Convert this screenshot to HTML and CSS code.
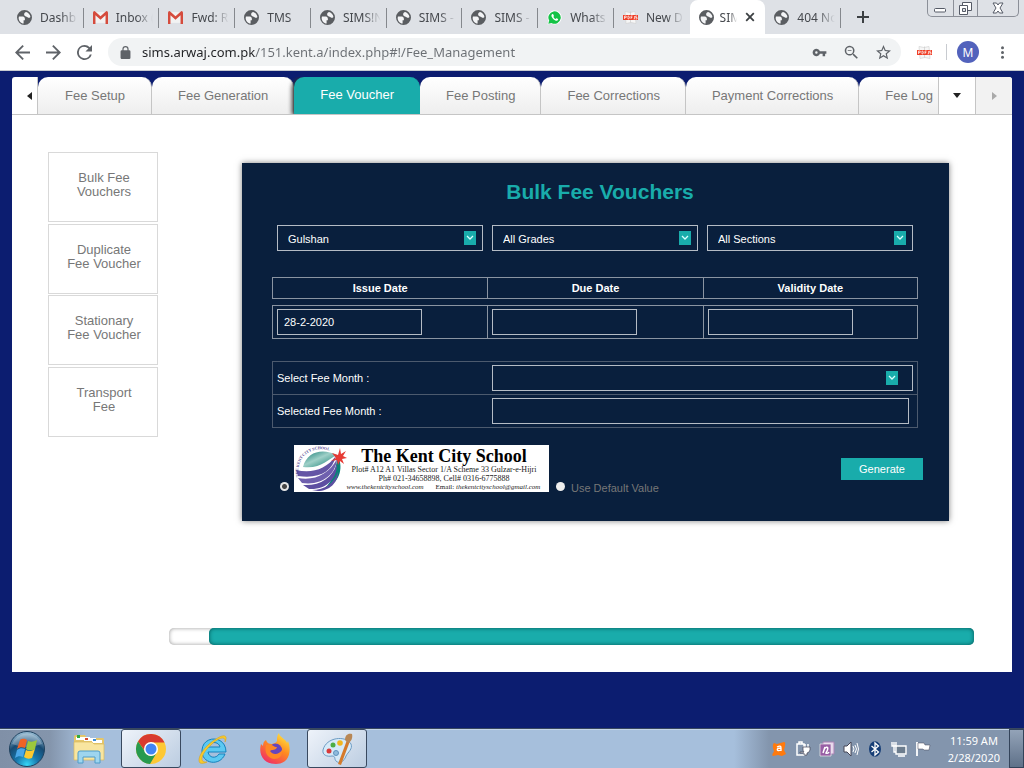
FILE: index.html
```html
<!DOCTYPE html>
<html lang="en">
<head>
<meta charset="utf-8">
<meta name="viewport" content="width=device-width, initial-scale=1">
<title>Fee Management</title>
<link rel="stylesheet" href="styles.css">
</head>
<body>
<svg class="sprite" aria-hidden="true">
  <symbol id="globe" viewBox="2 2 20 20"><circle cx="12" cy="12" r="9.500" fill="#f3f4f6"/><path fill-rule="evenodd" d="M12 2a10 10 0 1 0 0 20 10 10 0 0 0 0-20zM4.600 10.600h5.200c1.700 0 2.700 1.400 2.700 3.200v1.700h-1.700v4.600C7 19.800 4.200 16.500 4.200 12.600zM11.500 7.500c0-1.700 1.300-2.700 2.800-3 3 .9 5.200 3.600 5.600 6.700-1.200 1.400-2.600 1.400-3.800.4-1.300-1.100-4.600-1-4.600-4.100z" fill="#5a5d61"/></symbol>
  <symbol id="gmail" viewBox="0 0 14 12"><path fill="#f2f2f2" d="M1 1h12v10H1z"/><path fill="#d54b3d" d="M0 1.500Q0 0 1.500 0L7 4.800 12.500 0Q14 0 14 1.500V12h-2.300V4L7 8 2.300 4v8H0z"/></symbol>
  <symbol id="pdf" viewBox="0 0 15 14"><path d="M2 1l5 1 5-1 1 12-5-1-5 1z" fill="#f6f6f6" stroke="#d2d2d2" stroke-width=".7"/><path d="M7.500 1v11" stroke="#ccc" stroke-width=".7"/><path fill="#ef3e26" d="M0 4.500h15v5H0z"/><path d="M1.500 8.500v-3h1.700v1.600H1.500M5 5.500v3c2 0 2-3 0-3M8 8.500v-3h1.600M8 7h1.300M11.600 5.500v3h-1M14 5.500h-1.300V7H14v1.500h-1.300" fill="none" stroke="#fff" stroke-width=".7"/></symbol>
  <symbol id="chevron" viewBox="0 0 12 14"><path d="M3 5l3 3 3-3" fill="none" stroke="#d8ffff" stroke-width="1.300"/></symbol>
</svg>

<header class="browser">
  <div class="tabstrip">
    <nav class="tabs" aria-label="Open tabs">
      <button class="tab"><svg class="fav"><use href="#globe"/></svg><span>Dashb</span></button>
      <button class="tab"><svg class="fav"><use href="#gmail"/></svg><span>Inbox (</span></button>
      <button class="tab"><svg class="fav"><use href="#gmail"/></svg><span>Fwd: R</span></button>
      <button class="tab"><svg class="fav"><use href="#globe"/></svg><span>TMS</span></button>
      <button class="tab"><svg class="fav"><use href="#globe"/></svg><span>SIMS!N</span></button>
      <button class="tab"><svg class="fav"><use href="#globe"/></svg><span>SIMS -</span></button>
      <button class="tab"><svg class="fav"><use href="#globe"/></svg><span>SIMS -</span></button>
      <button class="tab"><svg class="fav" viewBox="0 0 15 15"><path d="M.5 14.500l1-3.600A7 7 0 1 1 4.200 13.600z" fill="#fff"/><path d="M1.300 13.700l.9-3.100A6.200 6.200 0 1 1 4.500 12.900z" fill="#14c346"/><path d="M5.300 4c-1.700 1.200-.8 3.200.9 4.900s4 2.500 4.800 1.100c.4-.9 0-1-.9-1.500s-1 0-1.500.4C7.700 8.500 6.800 7.700 6.400 6.900c.9-.9.500-1 .1-2.100-.3-.8-.6-1-1.200-.8z" fill="#fff"/></svg><span>Whats</span></button>
      <button class="tab last"><svg class="fav"><use href="#pdf"/></svg><span>New D</span></button>
      <button class="tab active"><svg class="fav"><use href="#globe"/></svg><span>SIM</span><svg class="close" viewBox="0 0 10 10"><path d="M1.200 1.200l7.600 7.600M8.800 1.200L1.200 8.800" stroke="#3c4043" stroke-width="1.800"/></svg></button>
      <button class="tab"><svg class="fav"><use href="#globe"/></svg><span>404 No</span></button>
    </nav>
    <button class="newtab" aria-label="New tab"><svg viewBox="0 0 12 12"><path d="M6 0v12M0 6h12" stroke="#3c4043" stroke-width="2"/></svg></button>
    <div class="winctl">
      <button aria-label="Minimize"><svg viewBox="0 0 25 16"><rect x="6.500" y="8.500" width="11" height="3.500" rx="1" fill="#fff" stroke="#555a66"/></svg></button>
      <button aria-label="Restore"><svg viewBox="0 0 23 16"><path d="M8.500 2.500h9v8h-9z" fill="#fff" stroke="#555a66"/><path d="M5.500 5.500h8v9h-8z" fill="#fff" stroke="#555a66"/><path d="M8.500 8.500h3v3h-3z" fill="#dfe3e8" stroke="#555a66"/></svg></button>
      <button aria-label="Close window"><svg viewBox="1 0 40 16"><path d="M16 3h3.500l1.500 2 1.500-2H26l-3 5 3 5h-3.500L21 11l-1.500 2H16l3-5z" fill="#fff" stroke="#555a66"/></svg></button>
    </div>
  </div>
  <div class="toolbar">
    <button aria-label="Back"><svg viewBox="4 4 16 16"><path d="M20 11H7.830l5.590-5.590L12 4l-8 8 8 8 1.410-1.410L7.830 13H20z"/></svg></button>
    <button aria-label="Forward"><svg viewBox="4 4 16 16"><path d="M12 4l-1.410 1.410L16.170 11H4v2h12.170l-5.580 5.590L12 20l8-8z"/></svg></button>
    <button aria-label="Reload"><svg viewBox="4 4 16 16"><path d="M17.650 6.350A7.960 7.960 0 0 0 12 4a8 8 0 1 0 7.730 10h-2.080A6 6 0 1 1 12 6c1.660 0 3.140.69 4.220 1.780L13 11h7V4z"/></svg></button>
    <div class="omnibox">
      <svg class="lock" viewBox="4 1 16 21"><path d="M18 8h-1V6A5 5 0 0 0 7 6v2H6a2 2 0 0 0-2 2v10c0 1.100.9 2 2 2h12a2 2 0 0 0 2-2V10a2 2 0 0 0-2-2zM8.900 6a3.100 3.100 0 0 1 6.200 0v2H8.900z"/></svg>
      <input class="url" type="text" aria-label="Address" value="sims.arwaj.com.pk/151.kent.a/index.php#!/Fee_Management">
      <button aria-label="Passwords"><svg viewBox="0 0 24 24"><path d="M12.650 10A6 6 0 1 0 12.650 14H17v4h4v-4h2v-4zM7 14a2 2 0 1 1 0-4 2 2 0 0 1 0 4z"/></svg></button>
      <button aria-label="Zoom"><svg viewBox="2 2 20 20"><path d="M15.500 14h-.79l-.28-.27A6.500 6.500 0 1 0 13.730 14.430l.27.28v.79l5 4.990L20.490 19zm-6 0a4.500 4.500 0 1 1 0-9 4.500 4.500 0 0 1 0 9zM7 9h5v1H7z"/></svg></button>
      <button aria-label="Bookmark"><svg viewBox="2 2 20 20"><path d="M22 9.240l-7.190-.62L12 2 9.190 8.630 2 9.240l5.460 4.730L5.820 21 12 17.270 18.180 21l-1.630-7.030zM12 15.400l-3.760 2.270 1-4.280-3.320-2.880 4.380-.38L12 6.100l1.710 4.040 4.380.38-3.320 2.880 1 4.280z"/></svg></button>
    </div>
    <button aria-label="PDF extension"><svg><use href="#pdf"/></svg></button>
    <span class="sep"></span>
    <button class="avatar">M</button>
    <button aria-label="Menu"><svg viewBox="0 0 16 16"><circle cx="8" cy="3" r="1.600"/><circle cx="8" cy="8" r="1.600"/><circle cx="8" cy="13" r="1.600"/></svg></button>
  </div>
</header>

<main class="page">
  <section class="panel">
    <div class="pagetabs">
      <button class="arrow" aria-label="Previous"><svg viewBox="0 0 6 8"><path d="M5 0v8L0 4z" fill="#222"/></svg></button>
      <nav class="strip" aria-label="Fee sections">
        <a href="#" class="ptab">Fee Setup</a>
        <a href="#" class="ptab">Fee Generation</a>
        <a href="#" class="ptab current">Fee Voucher</a>
        <a href="#" class="ptab">Fee Posting</a>
        <a href="#" class="ptab">Fee Corrections</a>
        <a href="#" class="ptab">Payment Corrections</a>
        <a href="#" class="ptab">Fee Log</a>
      </nav>
      <button class="drop" aria-label="All sections"><svg viewBox="0 0 8 5"><path d="M0 0h8L4 5z" fill="#222"/></svg></button>
      <button class="drop off" aria-label="Next"><svg viewBox="0 0 5 8"><path d="M0 0v8l5-4z" fill="#aaa"/></svg></button>
    </div>
    <div class="body">
      <nav class="side" aria-label="Voucher types">
        <a href="#">Bulk Fee<br>Vouchers</a>
        <a href="#">Duplicate<br>Fee Voucher</a>
        <a href="#">Stationary<br>Fee Voucher</a>
        <a href="#">Transport<br>Fee</a>
      </nav>
      <div class="content">
        <form class="card">
          <h1>Bulk Fee Vouchers</h1>
          <div class="filters">
            <div class="pick"><select aria-label="Campus"><option>Gulshan</option></select><svg><use href="#chevron"/></svg></div>
            <div class="pick"><select aria-label="Grade"><option>All Grades</option></select><svg><use href="#chevron"/></svg></div>
            <div class="pick"><select aria-label="Section"><option>All Sections</option></select><svg><use href="#chevron"/></svg></div>
          </div>
          <table class="dates">
            <thead><tr><th id="issue">Issue Date</th><th id="due">Due Date</th><th id="validity">Validity Date</th></tr></thead>
            <tbody><tr>
              <td><input type="text" aria-labelledby="issue" value="28-2-2020"></td>
              <td><input type="text" aria-labelledby="due"></td>
              <td><input type="text" aria-labelledby="validity"></td>
            </tr></tbody>
          </table>
          <table class="months">
            <tr><th><label for="month">Select Fee Month :</label></th><td><div class="pick wide"><select id="month"><option></option></select><svg><use href="#chevron"/></svg></div></td></tr>
            <tr><th><label for="chosen">Selected Fee Month :</label></th><td><input id="chosen" type="text"></td></tr>
          </table>
          <div class="actions">
            <input type="radio" name="head" id="head1" checked>
            <label for="head1"><svg class="banner" viewBox="0 0 255 47">
              <defs>
                <linearGradient id="ball" x1="0" y1="0" x2="1" y2="1"><stop offset="0" stop-color="#0d7770"/><stop offset=".45" stop-color="#9fd0c8"/><stop offset="1" stop-color="#08796c"/></linearGradient>
                <path id="arc" d="M5 32C1 12 18-3 42 8"/>
              </defs>
              <rect width="255" height="47" fill="#fff"/>
              <path d="M9 22C13 6 29 3 43 10 33 15 27 24 9 22z" fill="url(#ball)"/>
              <path d="M44 11c6 13 1 28-14 33 10-9 11-20 14-33z" fill="#0b8277"/>
              <path d="M2 25c16 4 30-1 40-14C38 27 25 34 4 31z" fill="#6455a5"/>
              <path d="M4 33c17 3 31-4 39-19-1 15-15 27-35 24z" fill="#6f60ae"/>
              <path d="M9 40c17 1 29-7 34-21 0 15-11 26-28 25z" fill="#5d4fa1"/>
              <path d="M18 45c13 0 22-7 26-18 0 11-9 19-20 19z" fill="#5d4fa1"/>
              <path d="M46 3l1 6 5-3-3 5 4 2-5 1 2 5-4-3-2 4-1-5-6 1 5-3-4-5 6 2z" fill="#e63b35"/>
              <text font-size="4" font-weight="bold" fill="#55468f"><textPath href="#arc">THE KENT CITY SCHOOL</textPath></text>
              <g fill="#222" text-anchor="middle">
                <text x="150" y="17" font-size="18" font-weight="bold" fill="#000">The Kent City School</text>
                <text x="150" y="27" font-size="8">Plot# A12 A1 Villas Sector 1/A Scheme 33 Gulzar-e-Hijri</text>
                <text x="150" y="36" font-size="8">Ph# 021-34658898, Cell# 0316-6775888</text>
                <text x="91" y="44" font-size="7" font-style="italic">www.thekentcityschool.com</text>
                <text x="194" y="44" font-size="7">Email: <tspan font-style="italic">thekentcityschool@gmail.com</tspan></text>
              </g>
            </svg></label>
            <input type="radio" name="head" id="head2">
            <label for="head2" class="default">Use Default Value</label>
            <button type="button" class="generate">Generate</button>
          </div>
        </form>
        <div class="progress" role="progressbar" aria-label="Progress"><div class="fill"></div></div>
      </div>
    </div>
  </section>
</main>

<footer class="taskbar">
  <button class="start" aria-label="Start"><svg viewBox="0 0 38 38"><defs><radialGradient id="orb" cx=".5" cy=".95" r=".9"><stop offset="0" stop-color="#35d7f7"/><stop offset=".35" stop-color="#1878ad"/><stop offset=".7" stop-color="#174a72"/><stop offset="1" stop-color="#8eb4cd"/></radialGradient></defs><circle cx="19" cy="19" r="17.500" fill="url(#orb)" stroke="#20425f"/><path d="M4 14A16 16 0 0 1 34 14Q19 20 4 14z" fill="#fff" opacity=".25"/><path d="M12 10c3-2 5-1 7 0l-2 8c-3-1-5-1-8 1z" fill="#ef6326"/><path d="M20 11c3 1 5 1 9-1l-2 9c-3 2-6 2-9 0z" fill="#9bc83c"/><path d="M9 20c3-2 5-2 8-1l-2 8c-3-1-5-1-8 1z" fill="#4aa7e8"/><path d="M18 20c3 2 6 1 9-1l-3 9c-3 1-5 1-8-1z" fill="#fdc92f"/></svg></button>
  <button class="task" aria-label="Explorer"><svg viewBox="0 0 32 32"><path d="M1 4Q1 2 3 2h9l2 3h16q1 0 1 2v20H1z" fill="#e5c66b"/><path d="M3 4h14v3H3z" fill="#fff"/><path d="M4 2h3v3H4z" fill="#2faa3e"/><path d="M11 5h12v3H11z" fill="#fff"/><path d="M12 5h3v2h-3z" fill="#d84a32"/><path d="M19 7h10v3H19z" fill="#fff"/><path d="M20 6h3v2h-3z" fill="#3c8fd8"/><path d="M1 9h18l2 2h10v16H1z" fill="#f8e5a0" stroke="#d9b95c" stroke-width=".7"/><path d="M5 30V20q0-2 2-2h18q2 0 2 2v10h-5v-6H10v6z" fill="#9ed5ef" stroke="#4e9cc9"/></svg></button>
  <button class="task open" aria-label="Chrome"><svg viewBox="0 0 32 32"><circle cx="16" cy="16" r="15" fill="#fdc834"/><path d="M3 8.500A15 15 0 0 1 29.500 9.500H16A6.500 6.500 0 0 0 10 18z" fill="#d83b30"/><path d="M3 8.500A15 15 0 0 0 15 31l6.500-11A6.500 6.500 0 0 1 10 18.500z" fill="#279a50"/><circle cx="16" cy="16" r="7" fill="#fff"/><circle cx="16" cy="16" r="5.500" fill="#4285f4"/></svg></button>
  <button class="task" aria-label="Internet Explorer"><svg viewBox="0 0 32 32"><path d="M29 19H11c1 6 8 7 11 2h6C23 34 4 31 5 17 6 2 29 2 29 19zM11 14h12c-1-6-11-6-12 0z" fill="#5cc9f2" stroke="#1482bd"/><path d="M28 9C31 3 28 0 19 6 7 13-1 26 3 30c2 1 5 0 7-1-9 1-5-9 4-17C21 5 29 2 28 9z" fill="#f8c92c" stroke="#d49e14" stroke-width=".5"/></svg></button>
  <button class="task" aria-label="Firefox"><svg viewBox="0 0 32 32"><defs><linearGradient id="fox" x1=".8" y1="0" x2=".2" y2="1"><stop offset="0" stop-color="#ffe840"/><stop offset=".45" stop-color="#ff8a20"/><stop offset="1" stop-color="#f0276b"/></linearGradient></defs><path d="M20 0c0 4 7 6 8 10l1-2c4 10 1 23-12 23C5 31-1 22 2 11l2 2c0-3 1-5 3-6 1 3 3 4 6 4 2-1 4-1 5-3 0-3 0-6 2-8z" fill="url(#fox)"/><circle cx="16.500" cy="17" r="6.500" fill="#6645bd"/><path d="M7 12c6-2 7 2 11 2-1 4-5 2-7 4 3 5 10 3 12-1 1 6-3 9-8 9-6-1-10-6-8-14z" fill="#ff8725"/></svg></button>
  <button class="task open" aria-label="Paint"><svg viewBox="0 0 32 32"><path d="M2 17C5 4 25 2 30 11c2 5-3 8-5 12-2 6-7 8-10 5-2-2 0-5-4-5-5 1-10-1-9-6z" fill="#d6eaf8" stroke="#6d9cc3"/><circle cx="8" cy="18" r="2.500" fill="#d93939"/><circle cx="12" cy="12" r="2.500" fill="#4dad43"/><circle cx="19" cy="10" r="2.800" fill="#f2b61f"/><circle cx="15" cy="20" r="2.500" fill="#91bcdd" stroke="#5f92bd"/><path d="M26 7l3 1-9 24-3-1z" fill="#d47a2b"/><path d="M24 7c0-5 3-7 7-6 1 4-1 8-4 9z" fill="#b88755"/></svg></button>
  <div class="tray">
    <svg viewBox="0 0 16 16"><path d="M3 2l3 1 7-2c2 0 1 3 1 4l-1 4 2 4-4 2-4-1-5 1c-2-1 1-4 1-5-1-3-2-6 0-8z" fill="#ff7a0d"/><path d="M6 6c4-2 4 0 4 1v3M10 7c-5 0-5 4 0 2" fill="none" stroke="#fff" stroke-width="1.300"/></svg>
    <svg viewBox="0 0 16 16"><path d="M2 3h7v11H2zM4 1h3v2H4z" fill="none" stroke="#fff" stroke-width="1.500"/><path d="M10 3v4M13 3v4" stroke="#fff" stroke-width="1.500"/><path d="M8 6h7v3q-1 3-3 3v2H9v-2H5v-1h4q-1-1-1-2z" fill="#fff" stroke="#445" stroke-width=".7"/></svg>
    <svg viewBox="0 0 16 16"><path d="M4 1h11v12H4z" fill="#e8d6ec" stroke="#a783b3"/><path d="M1 3h11v12H1z" fill="#985fa5" stroke="#eee" stroke-width=".7"/><path d="M4 12l2-6M5 8c4-4 5-1 2 4 2 1 3-1 3-1" fill="none" stroke="#fff" stroke-width="1.500"/></svg>
    <svg viewBox="0 0 16 16"><path d="M1 5h3l4-4v14l-4-4H1z" fill="#fff" stroke="#445"/><path d="M10 5q2 3 0 6M12 4q3 4 0 8M14 2q3 6 0 12" fill="none" stroke="#fff"/></svg>
    <svg viewBox="0 0 16 16"><ellipse cx="8" cy="8" rx="6" ry="7.800" fill="#163e76"/><path d="M4.500 5l7 6L8 14V2l3.500 3-7 6" fill="none" stroke="#fff" stroke-width="1.300"/></svg>
    <svg viewBox="0 0 16 16"><path d="M5 5h10v8H5z" fill="#6d7d8e" stroke="#fff" stroke-width="1.400"/><path d="M7 15h7M3 1v4M1 1v4h4V1M3 5v6h2" fill="none" stroke="#fff" stroke-width="1.400"/></svg>
    <svg viewBox="0 0 16 16"><path d="M2 1v14" stroke="#fff" stroke-width="1.800"/><path d="M3 2h6l1 2h5l-1 5H9L8 8H3z" fill="#fff" stroke="#445" stroke-width=".5"/></svg>
  </div>
  <div class="clock"><span>11:59 AM</span><span>2/28/2020</span></div>
  <button class="peek" aria-label="Show desktop"></button>
</footer>
</body>
</html>
```
FILE: styles.css
```css
* { box-sizing: border-box; }
body {
  margin: 0;
  min-height: 100vh;
  display: flex;
  flex-direction: column;
  background: #0c1d70;
  font-family: "Liberation Sans", Arial, sans-serif;
  font-size: 13px;
}
button { border: 0; padding: 0; margin: 0; background: none; font: inherit; color: inherit; }
a { color: inherit; text-decoration: none; }
svg { display: block; }
.sprite { position: absolute; width: 0; height: 0; }

/* Browser chrome */
.browser { font-family: "Noto Sans", "Open Sans", sans-serif; background: #fff; border-bottom: 1px solid #c8cbd0; }
.tabstrip { display: flex; height: 34px; background: #dee1e6; padding: 0 5px 0 8px; }
.tabs { display: flex; flex: 0 1 833px; min-width: 0; }
.tab {
  flex: 1 1 0;
  min-width: 0;
  display: flex;
  align-items: center;
  gap: 8px;
  padding: 0 2px 0 9px;
  font-size: 12px;
  color: #45484d;
  background: linear-gradient(#85888d, #85888d) right 8px / 1px 20px no-repeat;
}
.tab span {
  flex: 1;
  min-width: 0;
  overflow: hidden;
  white-space: nowrap;
  text-align: left;
  -webkit-mask-image: linear-gradient(90deg, #000 50%, transparent 90%);
  mask-image: linear-gradient(90deg, #000 50%, transparent 90%);
}
.tab.active { background: #fff; border-radius: 8px 8px 0 0; gap: 6px; }
.tab.last { background: none; }
.fav { width: 15px; height: 15px; flex: none; }
.close { width: 10px; height: 10px; flex: none; margin-right: 8px; }
.newtab { width: 44px; display: grid; place-items: center; }
.newtab svg { width: 12px; height: 12px; }
.winctl {
  margin-left: auto;
  display: flex;
  height: 17px;
  border: 1px solid #8b8f98;
  border-top: 0;
  border-radius: 0 0 5px 5px;
}
.winctl button + button { border-left: 1px solid #8b8f98; }
.winctl svg { height: 16px; }
.toolbar { display: flex; align-items: center; gap: 16px; height: 36px; padding: 0 14px 0 15px; color: #5f6368; }
.toolbar svg { width: 15px; height: 15px; fill: #5f6368; }
.omnibox {
  flex: 1;
  display: flex;
  align-items: center;
  gap: 17px;
  height: 28px;
  padding: 0 10px 0 12px;
  border-radius: 14px;
  background: #f1f3f4;
}
.toolbar .lock { width: 11px; height: 13px; margin-right: -6px; }
.url {
  flex: 1;
  min-width: 0;
  border: 0;
  padding: 0;
  font: 13px "Noto Sans", "Open Sans", sans-serif;
  color: #5f6368;
  background: linear-gradient(90deg, #202124 113px, #6b6f74 113px);
  -webkit-background-clip: text;
  background-clip: text;
  -webkit-text-fill-color: transparent;
}
.sep { width: 1px; height: 16px; background: #c8cbd0; margin: 0 -6px 0 -2px; }
.toolbar .avatar { width: 22px; height: 22px; border-radius: 50%; background: #5262bc; color: #fff; font-size: 12px; }

/* Page */
.page { flex: 1; padding: 6px 12px 48px; }
.panel { background: #fff; border-radius: 3px 3px 0 0; overflow: hidden; }
.pagetabs { display: flex; height: 38px; border-bottom: 1px solid #c5c5c5; color: #777; }
.arrow { width: 26px; padding-left: 15px; border-right: 1px solid #c5c5c5; }
.arrow svg { width: 6px; height: 8px; }
.strip { flex: 1; min-width: 0; display: flex; overflow: hidden; background: #0c1d70; }
.ptab {
  flex: none;
  padding: 0 25px 0 26px;
  line-height: 37px;
  border-right: 1px solid #c5c5c5;
  border-radius: 10px 10px 0 0;
  background: linear-gradient(#fff, #eee);
}
.ptab:first-child { padding: 0 26px 0 27px; }
.ptab.current { background: #19acab; color: #fff; line-height: 35px; border-color: #19acab; box-shadow: -2px 1px 4px #333; }
.drop { width: 37px; display: grid; place-items: center; border-left: 1px solid #c5c5c5; }
.drop svg { width: 8px; height: 5px; }
.drop.off { background: #f2f2f2; }
.drop.off svg { width: 5px; height: 8px; }
.body { display: flex; align-items: flex-start; gap: 11px; padding: 37px 38px 27px 36px; }
.side { flex: 0 0 110px; height: 285px; display: flex; flex-direction: column; justify-content: space-between; color: #777; }
.side a { height: 70px; padding: 18px 0 0 2px; border: 1px solid #d9d9d9; text-align: center; line-height: 14px; }
.content { flex: 1; min-width: 0; }

/* Voucher form */
.card {
  margin: 11px 25px 107px 73px;
  padding: 16px 31px 29px 30px;
  background: #091f3d;
  color: #fff;
  font-size: 11px;
  box-shadow: 0 0 6px rgba(0, 0, 0, .5);
}
.card h1 { margin: 0; padding-left: 10px; font-size: 21px; line-height: 26px; color: #19acab; text-align: center; }
.filters { display: grid; grid-template-columns: repeat(3, 1fr); gap: 9px; padding: 20px 5px 26px; }
.pick { position: relative; }
.pick svg { position: absolute; right: 7px; top: 6px; width: 12px; height: 14px; background: #19acab; pointer-events: none; }
.pick.wide svg { right: 15px; }
select, .dates input, .months input {
  display: block;
  width: 100%;
  height: 26px;
  appearance: none;
  border: 1px solid #b5bcc5;
  border-radius: 0;
  background: transparent;
  color: #fff;
  font: 11px "Liberation Sans", Arial, sans-serif;
  padding: 0 6px;
}
select { padding: 2px 10px 0; }
option { color: #000; }
table { width: 100%; table-layout: fixed; }
.dates { border-spacing: 0; margin-bottom: 22px; }
.dates th { height: 22px; padding: 0; border: 1px solid #8a94a2; border-right-width: 0; font-weight: bold; }
.dates td { padding: 3px 4px; border: 1px solid #8a94a2; border-right-width: 0; }
.dates th:last-child, .dates td:last-child { border-right-width: 1px; }
.dates thead::after { content: ""; display: block; height: 6px; }
.dates input { width: 145px; }
.months { border-collapse: collapse; }
.months tr { border: 1px solid #4c5a6e; }
.months th { width: 215px; padding: 0 4px; font-weight: normal; text-align: left; }
.months td { padding: 3px 4px; }
.months input { width: calc(100% - 4px); }
.actions { display: flex; align-items: flex-end; padding: 17px 0 0 8px; }
.actions input { appearance: none; width: 9px; height: 9px; margin: 0 5px 1px 0; border-radius: 50%; background: #eee; }
.actions input:checked { background: radial-gradient(#444 0 2px, #e6e6e6 3px); }
.banner { width: 255px; height: 47px; margin-right: 7px; font-family: "Liberation Serif", "Times New Roman", serif; }
.default { color: #777; line-height: 13px; margin-bottom: -3px; padding-left: 1px; }
.generate { margin: 0 -5px 12px auto; width: 82px; height: 22px; background: #19acab; color: #fff; }

.progress { height: 17px; display: flex; justify-content: flex-end; border-radius: 5px; box-shadow: inset 0 0 4px #999; }
.fill { width: 95%; border-radius: 5px; background: #19acab; box-shadow: inset 0 0 4px #055; }

/* Desktop taskbar */
.taskbar {
  display: flex;
  height: 40px;
  border-top: 1px solid #38475f;
  background: linear-gradient(90deg, #8090a7 0, #8495ac 50px, #a6bfdc 85px, #a6bfdc calc(100% - 290px), #8395ad calc(100% - 255px));
  box-shadow: inset 0 1px #c4d5e8;
}
.start { width: 54px; display: grid; place-items: center; margin-right: 5px; }
.start svg { width: 38px; height: 38px; }
.task { width: 60px; margin-right: 2px; display: grid; place-items: center; }
.task svg { width: 32px; height: 32px; }
.task.open { border: 1px solid #39495f; border-radius: 3px; background: linear-gradient(135deg, #eef3fa, #bccde1); }
.tray { margin-left: auto; display: flex; align-items: center; gap: 8px; margin-right: 17px; }
.tray svg { width: 16px; height: 16px; }
.clock { display: flex; flex-direction: column; justify-content: center; font: 11px/17px "Noto Sans", "Open Sans", sans-serif; color: #fff; text-align: center; margin-right: 9px; }
.peek { width: 15px; border: 1px solid #33435a; background: linear-gradient(#93a3b8, #5f7189); }
```
